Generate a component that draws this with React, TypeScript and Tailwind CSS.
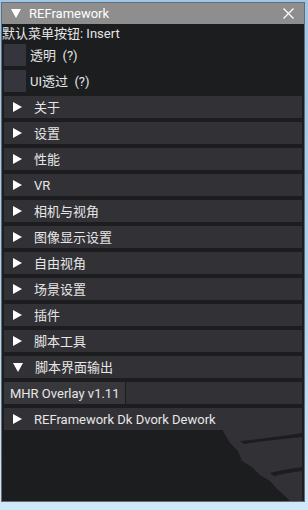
import React from "react";

const headers = [
  "关于",
  "设置",
  "性能",
  "VR",
  "相机与视角",
  "图像显示设置",
  "自由视角",
  "场景设置",
  "插件",
  "脚本工具",
];

function Arrow({ open = false }: { open?: boolean }) {
  return open ? (
    <svg width="10" height="9" viewBox="0 0 10 9" className="shrink-0">
      <polygon points="0,0 10,0 5,9" fill="#ffffff" />
    </svg>
  ) : (
    <svg width="9" height="10" viewBox="0 0 9 10" className="shrink-0">
      <polygon points="0,0 9,5 0,10" fill="#ffffff" />
    </svg>
  );
}

function Header({ label, open }: { label: string; open?: boolean }) {
  return (
    <div className="flex h-[22px] items-center gap-[12px] bg-[#323236] pl-[9px] text-[#e6e6e6]">
      <Arrow open={open} />
      <span>{label}</span>
    </div>
  );
}

function Check({ label }: { label: string }) {
  return (
    <div className="flex h-[22px] items-center gap-[4px]">
      <div className="h-[22px] w-[22px] bg-[#35353d]" />
      <span className="whitespace-pre text-[#e6e6e6]">{label}</span>
    </div>
  );
}

export default function App() {
  return (
    <div
      className="h-[510px] w-[308px] overflow-hidden bg-[linear-gradient(180deg,#9cc7e8_0%,#a9d4f2_60%,#cfe9fa_100%)] pl-[1px] pt-[2px] text-[13px] leading-none"
      style={{ fontFamily: 'Roboto, "Noto Sans CJK SC", sans-serif' }}
    >
      <div className="flex h-[500px] w-[304px] flex-col border border-[#6a6a6c]">
        <div className="flex h-[21px] shrink-0 items-center bg-[#8e8e8e] pl-[9px] pr-[10px] text-[#ffffff]">
          <Arrow open />
          <span className="ml-[8px] flex-1">REFramework</span>
          <svg width="11" height="11" viewBox="0 0 11 11">
            <path d="M0.5 0.5 L10.5 10.5 M10.5 0.5 L0.5 10.5" stroke="#ffffff" strokeWidth="1.2" />
          </svg>
        </div>
        <div className="relative flex flex-1 flex-col overflow-hidden bg-[#1c1d1f] pr-[2px]">
          <div className="flex h-[18px] items-center text-[#e6e6e6]">默认菜单按钮: Insert</div>
          <div className="ml-[2px] mt-[2px] flex flex-col gap-[4px]">
            <Check label="透明  (?)" />
            <Check label="UI透过  (?)" />
            {headers.map((h) => (
              <Header key={h} label={h} />
            ))}
            <Header label="脚本界面输出" open />
            <div className="flex h-[22px] items-stretch bg-[#323236]">
              <div className="flex items-center border-r border-[#1c1d1f] bg-[#38383c] px-[6px] text-[#e6e6e6]">
                MHR Overlay v1.11
              </div>
            </div>
            <Header label="REFramework Dk Dvork Dework" />
          </div>
          <svg
            className="absolute bottom-0 right-[2px]"
            width="80"
            height="72"
            viewBox="0 0 80 72"
          >
            <path
              d="M0 0 L80 0 L80 72 L68 72 L62 66 L55 60 L48 52 L38 46 L30 38 L20 32 L16 22 L8 14 Z"
              fill="#323236"
            />
            <path d="M18 12 Q40 10 80 4 L80 8 Q40 12 22 15 Z" fill="#1c1d1f" />
            <path d="M48 44 Q64 40 80 38 L80 42 Q64 44 52 47 Z" fill="#1c1d1f" />
          </svg>
        </div>
      </div>
    </div>
  );
}
